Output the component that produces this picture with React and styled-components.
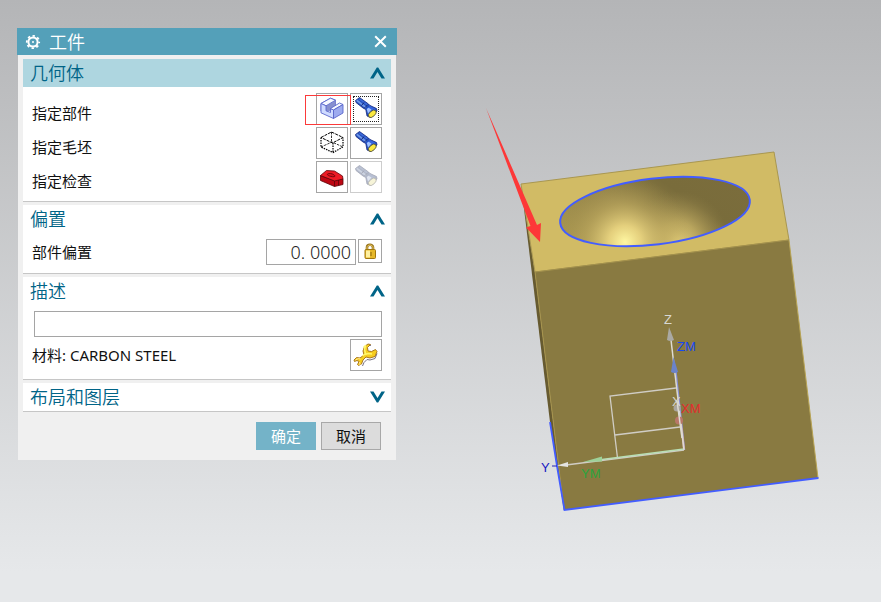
import * as React from 'react';
import styled, { createGlobalStyle } from 'styled-components';

const GlobalStyle = createGlobalStyle`
  * {
    box-sizing: border-box;
  }

  body {
    margin: 0;
    font-family: "Noto Sans", "Noto Sans CJK SC", sans-serif;
    font-size: 15px;
    line-height: 20px;
    color: #111;
  }

  button,
  input {
    font: inherit;
    margin: 0;
  }
`;

const Workspace = styled.main`
  display: flex;
  align-items: flex-start;
  min-height: 100vh;
  background: linear-gradient(#b4b5b7, #e6e8ea 95%);
`;

const Dialog = styled.form`
  flex: none;
  width: 380px;
  margin: 28px 0 28px 17px;
`;

const TitleBar = styled.header`
  display: flex;
  align-items: center;
  gap: 8px;
  height: 27px;
  padding: 0 10px 0 8px;
  background: #54a0b9;
  color: #fff;
`;

const Title = styled.h1`
  flex: 1;
  margin: 0;
  font-size: 18px;
  line-height: 26px;
  font-weight: 350;
`;

const CloseButton = styled.button`
  display: flex;
  padding: 0;
  border: 0;
  background: none;
  color: inherit;
`;

const DialogBody = styled.div`
  display: flex;
  flex-direction: column;
  gap: 3px;
  margin: 0 1px;
  padding: 4px 5px 10px;
  background: #f0f0f0;
`;

const Panel = styled.section`
  background: #fff;
  border-bottom: 1px solid #c6c6c6;
`;

const PanelTitle = styled.span`
  font-size: 18px;
  line-height: 26px;
  font-weight: 350;
`;

const PanelToggle = styled.button`
  display: flex;
  align-items: center;
  justify-content: space-between;
  width: 100%;
  height: 28px;
  padding: 0 6px 0 7px;
  border: 0;
  background: ${props => (props.$active ? '#aed6e0' : '#fff')};
  color: #006487;
`;

const PanelContent = styled.div`
  display: flex;
  flex-direction: column;
  gap: 2px;
  padding: 6px 9px 8px;
`;

const Row = styled.div`
  display: flex;
  align-items: center;
  justify-content: space-between;
`;

const RowLabel = styled.label`
  flex: 1;
  padding-top: ${props => (props.$low ? '8px' : '0')};
`;

const Tools = styled.div`
  position: relative;
  display: flex;
  gap: 2px;
`;

const ToolButton = styled.button`
  display: flex;
  align-items: center;
  justify-content: center;
  width: ${props => (props.$small ? '24px' : '32px')};
  height: ${props => (props.$small ? '24px' : '32px')};
  padding: 0;
  border: 1px solid #a5a5a5;
  background: #fff;
  outline: ${props => (props.$focused ? '1px dotted #222' : '0')};
  outline-offset: -4px;

  &:disabled {
    border-color: #cdcdcd;
  }

  &:disabled svg {
    opacity: 0.4;
    filter: saturate(0.4);
  }
`;

const Highlight = styled.span`
  position: absolute;
  top: 2px;
  left: -11px;
  width: 46px;
  height: 30px;
  border: 1px solid #fb3a3a;
  pointer-events: none;
`;

const NumberInput = styled.input`
  width: 90px;
  height: 26px;
  padding: 0 4px;
  border: 1px solid #a5a5a5;
  border-radius: 0;
  background: #fff;
  color: #222;
  font-family: "Noto Sans", sans-serif;
  font-size: 18px;
  font-weight: 300;
  text-align: right;
`;

const TextInput = styled.input`
  height: 26px;
  margin-left: 2px;
  padding: 0 4px;
  border: 1px solid #a5a5a5;
  border-radius: 0;
  background: #fff;
`;

const OffsetTools = styled.div`
  display: flex;
  align-items: flex-start;
  gap: 2px;
`;

const Footer = styled.footer`
  display: flex;
  justify-content: flex-end;
  gap: 5px;
  padding: 7px 10px 0 0;
`;

const FooterButton = styled.button`
  width: 60px;
  height: 28px;
  padding: 0;
  border: 1px solid ${props => (props.$primary ? '#74b3c8' : '#a8a8a8')};
  background: ${props => (props.$primary ? '#74b3c8' : '#dcdcdc')};
  color: ${props => (props.$primary ? '#fff' : '#111')};
`;

const Viewport = styled.div`
  flex: 1;
  min-width: 0;
`;

const Scene = styled.svg`
  display: block;
  width: 100%;
  font-family: "Liberation Sans", sans-serif;
  font-size: 13px;
`;

function GearIcon() {
  return (
    <svg width="16" height="16" viewBox="0 0 16 16" fill="none" stroke="#fff">
      <circle cx="8" cy="8" r="4.6" strokeWidth="2" />
      <circle cx="8" cy="8" r="6.2" strokeWidth="1.8" strokeDasharray="2.4 2.47" strokeDashoffset="1.2" />
      <circle cx="8" cy="8" r="1" fill="#fff" stroke="none" />
    </svg>
  );
}

function CloseIcon() {
  return (
    <svg width="13" height="13" viewBox="0 0 13 13" fill="none" stroke="#fff" strokeWidth="2">
      <path d="M1.2 1.2l10.6 10.6M11.8 1.2L1.2 11.8" />
    </svg>
  );
}

function Chevron({ open }) {
  return (
    <svg width="15" height="12" viewBox="0 0 15 12">
      <path
        d="M0 11.500L6.800 .5h1.400L15 11.500h-3.500L7.500 5 3.500 11.500z"
        fill="#006487"
        transform={open ? undefined : 'rotate(180 7.5 6)'} />
    </svg>
  );
}

function PartIcon() {
  return (
    <svg width="30" height="30" viewBox="1 1 30 30" stroke="#5a66cc" strokeWidth=".9" strokeLinejoin="round">
      <path d="M5 10.500L14.500 5.200l5 2V13L10 19.500 5 18z" fill="#e3eaff" />
      <path d="M10 13L19.500 7.200V13L14 18l-4 .5z" fill="#8790cf" stroke="none" />
      <path d="M5 10.500L14.500 5.200l5 2L10 12.800z" fill="#f6f9ff" />
      <path d="M5 10.500l5 2.300v5l4.500 1.700v-4l3 1.500V25.500L5 19.800z" fill="#cfdbff" />
      <path d="M14.500 15.500L23.500 10l3.500 1.500-9.500 5.500z" fill="#f6f9ff" />
      <path d="M17.500 17L27 11.500V20l-9.500 5.500z" fill="#9dabef" />
    </svg>
  );
}

function BlankIcon() {
  return (
    <svg width="30" height="30" viewBox="1 1 30 30" fill="none" stroke="#000">
      <path d="M5 10.500L15.500 5 27 10.500 16.500 16z" strokeDasharray="3 1" />
      <path d="M5 10.500v9.500l12 5.500L27 20v-9.500M17 16v9.500" strokeWidth="1.200" strokeDasharray="1.500 1" />
      <path d="M15.500 5v10M5 20l11-5 11 5" strokeWidth=".8" strokeDasharray="2.500 1" />
    </svg>
  );
}

function CheckIcon() {
  return (
    <svg width="30" height="30" viewBox="1 1 30 30" stroke="#5c0509" strokeWidth=".8" strokeLinejoin="round">
      <path d="M4.500 14.500v5L18.500 25.500l8.500-2V18l-8.500 1.500z" fill="#bd0713" />
      <path d="M4.500 14.500L10.500 9.500l8 .5 8 5 .5 3-8.500 2z" fill="#ed1c25" />
      <path d="M18.500 20v5.500M22.500 19v5.500" fill="none" />
      <path d="M11.500 13c1.500-1 4.500-.5 6 .5s2 2 .5 2.200c-2 .3-7.500-1-6.500-2.700z" fill="#d8121d" />
    </svg>
  );
}

function FlashlightIcon() {
  return (
    <svg width="30" height="30" viewBox="1 1 30 30" strokeLinejoin="round">
      <path
        d="M5.500 7.500L9.500 4.500 18.500 11l1.500 1.500 6.500 3 .5 2.500-6.500 6.500-3.500-1.500-1.200-6.500-2.800-1.500-7-5.500z"
        fill="#2450bf"
        stroke="#14277c"
        strokeWidth=".8" />
      <path d="M7.200 6.500l9.300 7.200-1 1.500-9.300-7.200z" fill="#6f98e8" />
      <path d="M10 5.500l8.500 6.300-.8 1.200-8.700-6.500z" fill="#3d6bd8" />
      <path d="M16.500 16l3.500-3 5.500 3-6.500 6.500z" fill="#3565e0" />
      <path d="M16.800 16l1.700-1.300 3 1.800-3.500 4z" fill="#a0c2ff" />
      <path d="M11.500 12.500l2.500-3M14.500 15l3.500-3.500" stroke="#0c1c66" strokeWidth=".9" />
      <ellipse cx="22.300" cy="20.800" rx="4.600" ry="2.700" transform="rotate(-42 22.300 20.800)" fill="#fbe93f" stroke="#4a4a3a" strokeWidth=".8" />
    </svg>
  );
}

function LockIcon() {
  return (
    <svg width="14" height="16" viewBox="0 0 14 16">
      <path d="M4 7V4.500C4 .8 10 .8 10 4.500V7" fill="none" stroke="#94701a" strokeWidth="2.600" />
      <path d="M4 7V4.500C4 1.200 10 1.200 10 4.500V7" fill="none" stroke="#efcf64" />
      <rect x="2" y="6.500" width="10.500" height="9" rx="1" fill="#e6b82a" stroke="#a0760f" />
      <path d="M3 7.500h4v7H3z" fill="#fff0a0" />
      <path d="M8 9v4" stroke="#8a6408" />
    </svg>
  );
}

function WrenchIcon() {
  return (
    <svg width="30" height="30" viewBox="1 1 30 30" strokeLinejoin="round">
      <path d="M18.500 6l2.500.5M27 14.500l-2 5-5 1.500-3-.5-3 3-1.500 3.500" fill="none" stroke="#777283" />
      <path
        d="M18 5l2.500.5-3 3 .5 3.500 3.500.5 4-2 1.500 2-2 5-5 1.500-4-1-3 3-1.500 4-3 1.500-1-1 1.500-3-2-1-2.500 1-.5-1.500 2.500-2.500 3.500.5 4-3-1-4 1.500-4.500z"
        fill="#f6cd20"
        stroke="#a06c14"
        strokeWidth=".9" />
      <path d="M13.500 8.500l2-2-1 4 1 4-3 2.500M15 15.500l3-1 4 .500" fill="none" stroke="#fff66c" strokeWidth="1.500" />
      <path d="M5.500 21l3-1.500 2 .5M9.500 23l.5 3" fill="none" stroke="#ffe59b" />
    </svg>
  );
}

function PanelSection({ title, open, active, children }) {
  return (
    <Panel>
      <PanelToggle type="button" aria-expanded={!!open} $active={active}>
        <PanelTitle>{title}</PanelTitle>
        <Chevron open={open} />
      </PanelToggle>
      {open && <PanelContent>{children}</PanelContent>}
    </Panel>
  );
}

const geometryRows = [
  { id: 'part', label: '指定部件', Icon: PartIcon, highlighted: true },
  { id: 'blank', label: '指定毛坯', Icon: BlankIcon },
  { id: 'check', label: '指定检查', Icon: CheckIcon, disabled: true },
];

function WorkpieceDialog() {
  const [offset, setOffset] = React.useState('0. 0000');

  return (
    <Dialog aria-label="工件" onSubmit={e => e.preventDefault()}>
      <TitleBar>
        <GearIcon />
        <Title>工件</Title>
        <CloseButton type="button" aria-label="关闭">
          <CloseIcon />
        </CloseButton>
      </TitleBar>
      <DialogBody>
        <PanelSection title="几何体" open active>
          {geometryRows.map(({ id, label, Icon, highlighted, disabled }) => (
            <Row key={id}>
              <RowLabel $low htmlFor={id}>{label}</RowLabel>
              <Tools>
                <ToolButton type="button" id={id}>
                  <Icon />
                </ToolButton>
                <ToolButton type="button" aria-label={`显示${label}`} disabled={disabled} $focused={highlighted}>
                  <FlashlightIcon />
                </ToolButton>
                {highlighted && <Highlight />}
              </Tools>
            </Row>
          ))}
        </PanelSection>

        <PanelSection title="偏置" open>
          <Row>
            <RowLabel htmlFor="offset">部件偏置</RowLabel>
            <OffsetTools>
              <NumberInput id="offset" value={offset} onChange={e => setOffset(e.target.value)} />
              <ToolButton type="button" aria-label="锁定" $small>
                <LockIcon />
              </ToolButton>
            </OffsetTools>
          </Row>
        </PanelSection>

        <PanelSection title="描述" open>
          <TextInput aria-label="描述" />
          <Row>
            <RowLabel htmlFor="material">材料: CARBON STEEL</RowLabel>
            <ToolButton type="button" id="material">
              <WrenchIcon />
            </ToolButton>
          </Row>
        </PanelSection>

        <PanelSection title="布局和图层" />

        <Footer>
          <FooterButton type="submit" $primary>确定</FooterButton>
          <FooterButton type="button">取消</FooterButton>
        </Footer>
      </DialogBody>
    </Dialog>
  );
}

function ModelScene() {
  return (
    <Scene viewBox="397 0 484 602" preserveAspectRatio="xMinYMin meet">
      <defs>
        <linearGradient id="bowl" x1="0" y1=".7" x2="1" y2=".3">
          <stop offset="0" stopColor="#a8964f" />
          <stop offset=".4" stopColor="#96854a" />
          <stop offset=".7" stopColor="#796c3b" />
          <stop offset="1" stopColor="#7b6d3c" />
        </linearGradient>
        <radialGradient id="glow" gradientUnits="userSpaceOnUse" cx="625" cy="242" r="66">
          <stop offset="0" stopColor="#fff7a2" />
          <stop offset=".25" stopColor="#ecd782" stopOpacity=".9" />
          <stop offset=".6" stopColor="#c3ae62" stopOpacity=".5" />
          <stop offset="1" stopColor="#a5934f" stopOpacity="0" />
        </radialGradient>
        <radialGradient id="glowRight" gradientUnits="userSpaceOnUse" cx="678" cy="243" r="52">
          <stop offset="0" stopColor="#e8d27c" />
          <stop offset=".4" stopColor="#c8b366" stopOpacity=".75" />
          <stop offset="1" stopColor="#93824a" stopOpacity="0" />
        </radialGradient>
      </defs>

      {/* solid block */}
      <path d="M521 184L535 272 564 510 550 422z" fill="#665a30" />
      <path d="M521 184L774 152 789 240 535 272z" fill="#d1bb65" stroke="#a99750" />
      <path d="M535 272L789 240 818 478 564 510z" fill="#897a41" />
      <path d="M789 240L818 478" stroke="#b8a455" />
      <path d="M535 272L564 510" stroke="#a7944d" />
      <path d="M535 272L789 240" stroke="#a3914d" />
      <path d="M550 422L557 466 564.500 510 818.500 478" fill="none" stroke="#435dff" strokeWidth="1.800" />

      {/* cavity */}
      <g transform="rotate(-7 655 211.500)">
        <ellipse cx="655" cy="211.500" rx="95.500" ry="33" fill="url(#bowl)" />
      </g>
      <clipPath id="rim">
        <ellipse cx="655" cy="211.500" rx="95.500" ry="33" transform="rotate(-7 655 211.500)" />
      </clipPath>
      <g clipPath="url(#rim)">
        <rect x="555" y="170" width="200" height="80" fill="url(#glowRight)" />
        <rect x="555" y="170" width="200" height="80" fill="url(#glow)" />
      </g>
      <ellipse
        cx="655"
        cy="211.500"
        rx="95.500"
        ry="33"
        transform="rotate(-7 655 211.500)"
        fill="none"
        stroke="#435dff"
        strokeWidth="2" />

      {/* coordinate systems */}
      <g fill="none" stroke="#d0cdc5" strokeWidth="1.300">
        <path d="M676 388L610 396 617.500 458M615 435L680 427" />
        <path d="M684 450L566 465" />
      </g>
      <path d="M684 449L602 459.500" stroke="#b9dfb5" strokeWidth="1.500" />
      <path d="M684.500 450L676 372" stroke="#8790dc" strokeWidth="1.500" />
      <path d="M684 449L680 416" stroke="#d2a5a5" strokeWidth="2" />
      <path d="M684 450L671 340" stroke="#dedbd3" strokeWidth="1.500" />
      <path d="M669 327L667 340q3.500 2 7 0z" fill="#aaa9a3" />
      <path d="M673.500 357L671 372q3.500 2 7 0z" fill="#6b83c9" />
      <path d="M557 465.500L568 462v5z" fill="#e3e3e0" />
      <path d="M583 462L602 456.500v5z" fill="#9ed198" />
      <path d="M552 466h5" stroke="#2020bd" />
      <circle cx="677" cy="408" r="3.500" fill="#aaa69e" />
      <circle cx="679" cy="420.500" r="4" fill="#b97769" />
      <path d="M677 401L682 438" stroke="#dedbd3" strokeWidth="1.500" />

      <text x="664" y="324" fill="#d8d8d2">Z</text>
      <text x="677" y="351" fill="#1748f3">ZM</text>
      <text x="672" y="406" fill="#d8d8d2">X</text>
      <text x="681" y="413" fill="#e32c2f">XM</text>
      <text x="541" y="472" fill="#1719c2">Y</text>
      <text x="581" y="478" fill="#2ca43d">YM</text>

      {/* pointer */}
      <path d="M486 108L537 225 541 223 540 242 526 227.500 530.500 226z" fill="#fd3838" />
    </Scene>
  );
}

function App() {
  return (
    <>
      <GlobalStyle />
      <Workspace>
        <WorkpieceDialog />
        <Viewport>
          <ModelScene />
        </Viewport>
      </Workspace>
    </>
  );
}

export default App;
